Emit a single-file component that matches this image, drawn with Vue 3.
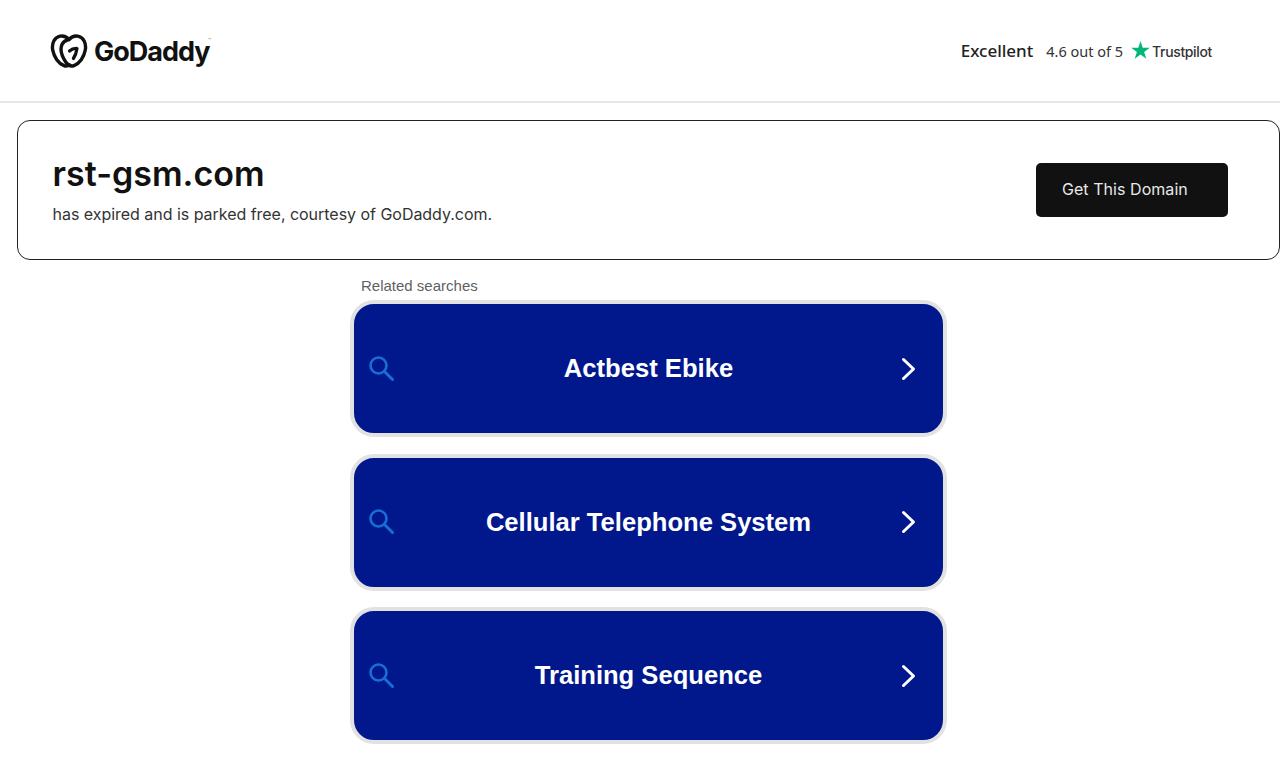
<script setup>
const items = ['Actbest Ebike', 'Cellular Telephone System', 'Training Sequence']
</script>

<template>
  <div class="page">
    <header class="top">
      <div class="logo">
        <svg class="mark" width="38" height="34" viewBox="0 0 38 34" fill="none">
          <path d="M19 5.500C21.500 2.800 24.500 1.600 27.800 2.200 33.600 3.300 36.500 9.500 35.300 16 34 23 29.500 29.500 24 31.600 20.500 32.900 17.800 31.200 15.700 28 12.200 22.700 9.800 15.500 12 10.500 13.200 8 15.500 6.500 17.500 6" stroke="#111" stroke-width="3.400" stroke-linecap="round" stroke-linejoin="round"/>
          <path d="M19 5.500C16.500 2.800 13.500 1.600 10.200 2.200 4.400 3.300 1.500 9.500 2.700 16 4 23 8.500 29.500 14 31.600 15.800 32.300 17.600 32.100 19.200 30.800" stroke="#111" stroke-width="3.400" stroke-linecap="round" stroke-linejoin="round"/>
          <path d="M19.500 17C21.500 15.200 24 14.300 27 14.500 26.500 18 25.400 21.500 23.400 24.500" stroke="#111" stroke-width="3.200" stroke-linecap="round" stroke-linejoin="round"/>
        </svg>
        <span class="word">GoDaddy</span>
        <span class="tm">™</span>
      </div>
      <div class="trust">
        <span class="excellent">Excellent</span>
        <span class="score">4.6 out of 5</span>
        <span class="pilot">
          <svg width="19" height="18" viewBox="0 0 19 18"><path d="M9.500 0l2.200 6.700h7.100l-5.700 4.200 2.200 6.800-5.800-4.200-5.800 4.200 2.200-6.800L.2 6.700h7.100z" fill="#00b67a"/></svg>
          <span class="pilot-name">Trustpilot</span>
        </span>
      </div>
    </header>

    <section class="domain">
      <div class="info">
        <h1>rst-gsm.com</h1>
        <p>has expired and is parked free, courtesy of GoDaddy.com.</p>
      </div>
      <button class="cta">Get This Domain</button>
    </section>

    <main class="searches">
      <div class="label">Related searches</div>
      <a v-for="item in items" :key="item" class="row">
        <svg class="glass" width="28" height="28" viewBox="0 0 28 28" fill="none">
          <circle cx="11.500" cy="11.500" r="8" stroke="#1a6dd6" stroke-width="2.600"/>
          <path d="M17.500 17.500l8 8" stroke="#1a6dd6" stroke-width="3" stroke-linecap="round"/>
        </svg>
        <span class="text">{{ item }}</span>
        <svg class="chev" width="16" height="24" viewBox="0 0 16 24" fill="none">
          <path d="M2.500 2.500L12.500 12L2.500 21.500" stroke="#fff" stroke-width="3" stroke-linecap="round" stroke-linejoin="round"/>
        </svg>
      </a>
    </main>
  </div>
</template>

<style>
html, body { margin: 0; background: #fff; overflow: hidden; }
</style>

<style scoped>
.page { width: 1280px; height: 768px; overflow: hidden; display: flex; flex-direction: column; font-family: "Liberation Sans", sans-serif; }
.top { height: 101px; box-sizing: content-box; border-bottom: 2px solid #e6e6e6; display: flex; align-items: center; justify-content: space-between; padding: 0 68px 0 50px; }
.logo { position: relative; display: flex; align-items: center; gap: 6px; }
.mark { display: block; }
.word { font-family: "Inter", sans-serif; font-weight: 700; font-size: 27px; letter-spacing: -1px; color: #111; margin-top: 2px; }
.tm { position: absolute; left: 158px; top: 4px; font-family: "Inter", sans-serif; font-size: 5px; line-height: 6px; color: #777; }
.trust { display: flex; align-items: center; color: #222; margin-top: 1px; }
.excellent { font-family: "Noto Sans", sans-serif; font-weight: 500; font-size: 17px; margin-right: 13px; margin-top: -2px; }
.score { font-family: "Noto Sans", sans-serif; font-size: 14.500px; color: #333; margin-right: 8px; }
.pilot { display: flex; align-items: center; gap: 2px; font-family: "Inter", sans-serif; font-weight: 500; font-size: 14px; letter-spacing: -.35px; color: #333; }
.pilot svg { margin-top: -2px; }
.pilot-name { margin-top: 1px; }
.domain { margin: 17px 0 0 17px; height: 140px; box-sizing: border-box; border: 1px solid #222; border-radius: 13px; display: flex; align-items: center; justify-content: space-between; padding: 0 51px 0 34.500px; }
.info { margin-top: -2px; }
h1 { margin: 0; font-family: "Inter", sans-serif; font-weight: 600; font-size: 34px; line-height: 40px; letter-spacing: .02px; color: #111; }
p { margin: 10px 0 0; font-family: "Inter", sans-serif; font-size: 16px; line-height: 20px; letter-spacing: -.03px; color: #333; }
.cta { width: 192px; height: 54px; margin-top: -1px; background: #111; color: #e8e8e8; border: 0; border-radius: 5px; font-family: "Inter", sans-serif; font-size: 16px; letter-spacing: .05px; text-align: left; padding: 0 0 2px 26px; }
.searches { width: 597px; margin-left: 350px; display: flex; flex-direction: column; gap: 16.600px; }
.label { font-size: 15px; line-height: 17px; color: #5f5f5f; margin: 17px 0 -10.600px 11px; }
.row { position: relative; height: 137px; box-sizing: border-box; border: 4px solid #e2e2e2; border-radius: 24px; background: #00188c; display: flex; align-items: center; justify-content: center; color: #fff; }
.text { font-size: 25.600px; font-weight: 700; color: #fff; }
.glass { position: absolute; left: 13px; top: 50%; transform: translateY(-50%); margin-top: -1px; }
.chev { position: absolute; right: 26px; top: 50%; transform: translateY(-50%); }
</style>
